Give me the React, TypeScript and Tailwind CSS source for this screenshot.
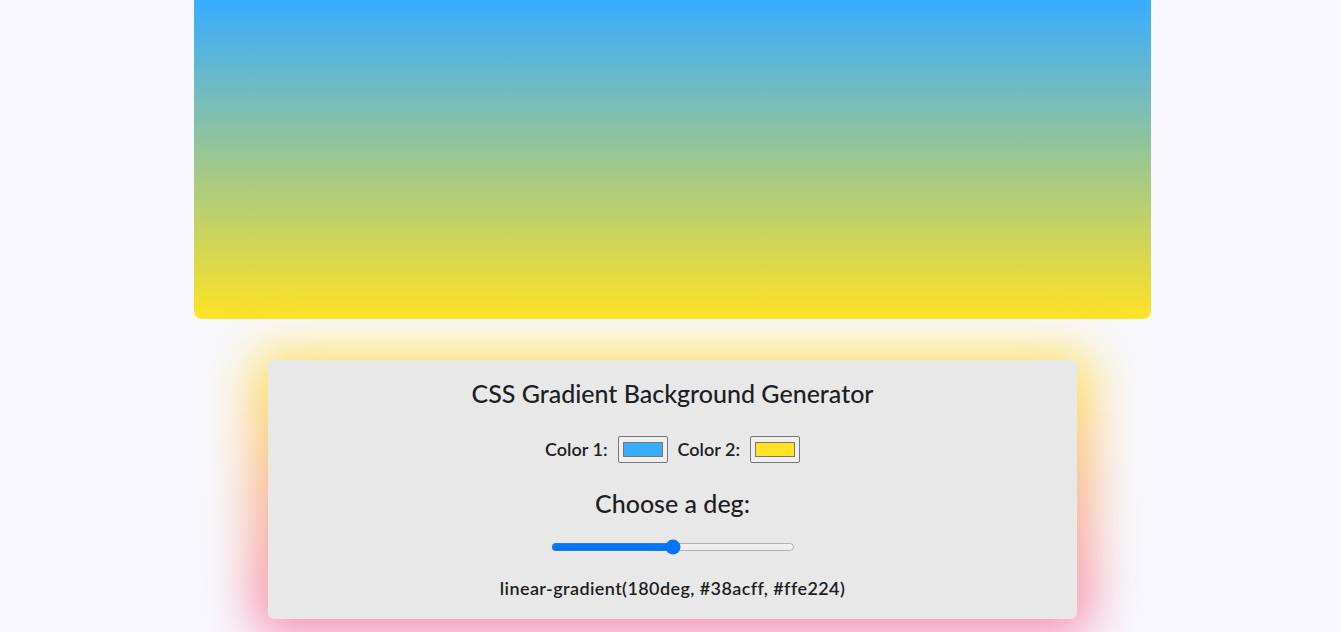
import { useState } from "react";

export default function App() {
  const [c1, setC1] = useState("#38acff");
  const [c2, setC2] = useState("#ffe224");
  const [deg, setDeg] = useState(180);
  const css = `linear-gradient(${deg}deg, ${c1}, ${c2})`;

  const swatch =
    "w-[50px] h-[27px] border border-[#767676] rounded-[2px] bg-[#efefef] px-[2px] py-[1px] cursor-pointer";

  return (
    <div
      className="min-h-[632px] bg-[#f8f8fc] text-[#1e1e24] overflow-hidden"
      style={{ fontFamily: "Lato, 'Open Sans', sans-serif" }}
    >
      <div className="flex flex-col items-center pl-[4px]">
        {/* preview */}
        <div className="w-[957px] h-[319px] rounded-b-lg" style={{ background: css }} />

        {/* controls */}
        <div className="relative mt-[41px] w-[809px]">
          <div className="absolute -inset-x-[16px] -top-[8px] -bottom-[18px] rounded-3xl bg-gradient-to-b from-[#ffe650] via-[#f9b48c] to-[#f68cbc] blur-[24px]" />
          <div className="relative flex flex-col items-center rounded-md bg-[#e8e8e8] pt-[18px] pb-[17px]">
            <h1 className="text-[25px] font-medium leading-[30px]">CSS Gradient Background Generator</h1>

            <div className="mt-[28px] flex items-center text-[18px] font-semibold">
              <label className="mr-[10px]">Color 1:</label>
              <input type="color" value={c1} onChange={(e) => setC1(e.target.value)} className={swatch} />
              <label className="ml-[10px] mr-[10px]">Color 2:</label>
              <input type="color" value={c2} onChange={(e) => setC2(e.target.value)} className={swatch} />
            </div>

            <h2 className="mt-[25px] text-[25px] font-medium leading-[30px]">Choose a deg:</h2>

            <input
              type="range"
              min={0}
              max={360}
              value={deg}
              onChange={(e) => setDeg(Number(e.target.value))}
              className="mt-[21px] w-[244px]"
            />

            <p className="mt-[20px] text-[18px] font-semibold tracking-[0.4px]">{css}</p>
          </div>
        </div>
      </div>
    </div>
  );
}
